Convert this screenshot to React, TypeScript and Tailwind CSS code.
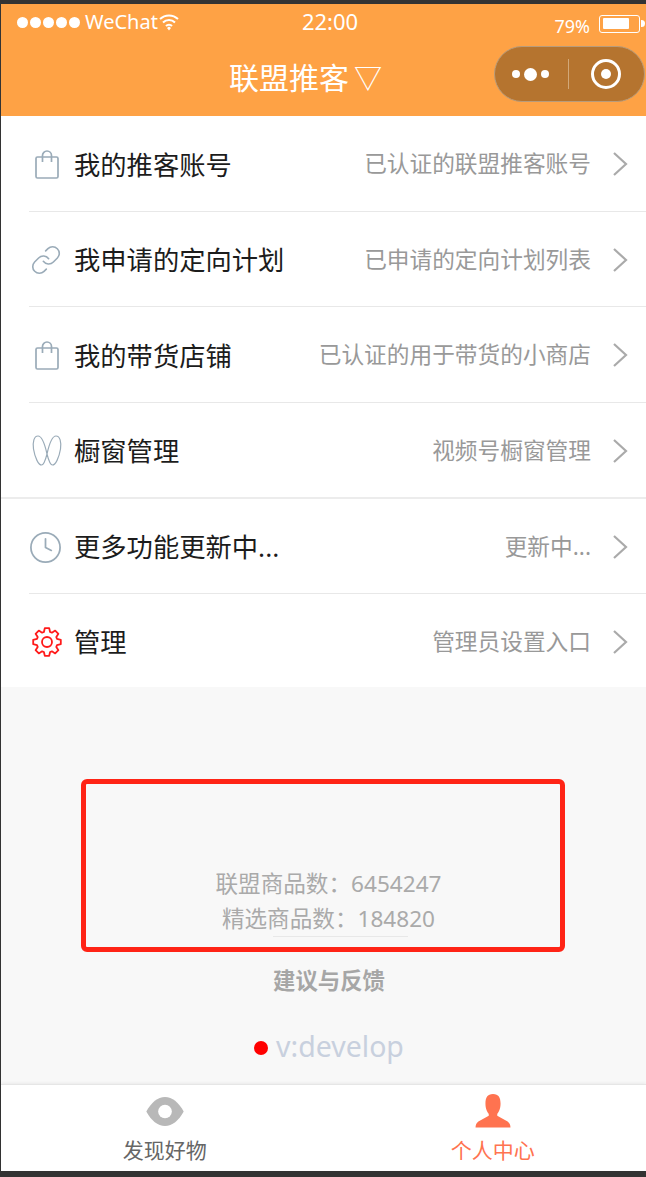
import React from "react";
import { Clock, Link } from "lucide-react";

const font = "font-['Noto_Sans','Noto_Sans_CJK_SC',sans-serif]";

const BagIcon = () => (
  <svg width="24" height="29" viewBox="0 0 24 29" fill="none" stroke="#9aabb8" strokeWidth="1.7" className="mt-[2px] ml-[6px]">
    <rect x="1" y="7" width="22" height="21" rx="1.5" />
    <path d="M7.500 12V5.500a4.500 4.500 0 0 1 9 0V12" />
  </svg>
);

const WingIcon = () => (
  <svg width="30" height="31" viewBox="0 0 30 31" fill="none" stroke="#9aabb8" strokeWidth="1.2" className="mt-[2px] ml-[3px]">
    <path d="M6 1c4 0 7 9 9 18 1.500 6 3 11 5.500 11 3 0 6.500-7 8-16 1-7-.5-13-4.500-13-4 0-7 9-9 18-1.500 6-3 11-5.500 11-3 0-6.500-7-8-16C.5 7 2 1 6 1Z" />
  </svg>
);

// 8 tooth cog outline
const gearPoints = Array.from({ length: 8 }, (_, i) => {
  const a = (i * Math.PI) / 4 - Math.PI / 2;
  const pt = (r: number, d: number) =>
    `${(15 + r * Math.cos(a + d)).toFixed(1)},${(15 + r * Math.sin(a + d)).toFixed(1)}`;
  return [pt(10.500, -0.3), pt(14, -0.16), pt(14, 0.16), pt(10.500, 0.3)].join(" ");
}).join(" ");

const GearIcon = () => (
  <svg width="30" height="30" viewBox="0 0 30 30" fill="none" stroke="#ff1a1a" strokeWidth="1.8" strokeLinejoin="round" className="mt-[2px] ml-[3px]">
    <polygon points={gearPoints} />
    <circle cx="15" cy="15" r="5" />
  </svg>
);

const Chevron = () => (
  <svg width="16" height="26" viewBox="0 0 16 26" fill="none" stroke="#aaaaaa" strokeWidth="2.200" className="mt-[2px] ml-[21px] shrink-0">
    <path d="M2 2l12 11L2 24" />
  </svg>
);

type RowProps = { icon: React.ReactNode; title: string; note: string; heightClass: string; last?: boolean };

const rows: RowProps[] = [
  { icon: <BagIcon />, title: "我的推客账号", note: "已认证的联盟推客账号", heightClass: "h-[95.5px]" },
  {
    icon: <Link size={32} color="#9aabb8" strokeWidth={1.200} className="mt-[2px] ml-[1px]" />,
    title: "我申请的定向计划",
    note: "已申请的定向计划列表",
    heightClass: "h-[95.5px]",
  },
  { icon: <BagIcon />, title: "我的带货店铺", note: "已认证的用于带货的小商店", heightClass: "h-[95.5px]" },
  { icon: <WingIcon />, title: "橱窗管理", note: "视频号橱窗管理", heightClass: "h-[94.5px]", last: true },
];

const moreRows: RowProps[] = [
  {
    icon: <Clock size={35} color="#9aabb8" strokeWidth={1.200} className="mt-[2px] -ml-[1px]" />,
    title: "更多功能更新中...",
    note: "更新中...",
    heightClass: "h-[95px]",
  },
  { icon: <GearIcon />, title: "管理", note: "管理员设置入口", heightClass: "h-[93px]", last: true },
];

const Row = ({ icon, title, note, heightClass, last }: RowProps) => (
  <div className="pl-[28px]">
    <div className={`flex items-center pr-[18px] ${heightClass} ${last ? "" : "border-b border-[#e8e8e8]"}`}>
      <div className="flex w-[45px] shrink-0 items-center">{icon}</div>
      <span className="mt-[3px] text-[26.300px] leading-none text-[#1c1c1c]">{title}</span>
      <span className="mt-[3px] ml-auto text-[22.700px] leading-none text-[#999999]">{note}</span>
      <Chevron />
    </div>
  </div>
);

export default function App() {
  return (
    <div className={`flex h-[1177px] w-[646px] flex-col overflow-hidden bg-[#333333] pt-[4px] pl-[1px] ${font}`}>
      {/* header */}
      <div className="relative h-[112px] shrink-0 bg-[#fea245] text-white">
        <div className="flex h-[36px] items-center justify-between pr-[1px] pl-[16px]">
          <div className="flex w-[170px] items-center">
            <div className="flex gap-[2px]">
              {[0, 1, 2, 3, 4].map((i) => (
                <span key={i} className="h-[11px] w-[11px] rounded-full bg-white" />
              ))}
            </div>
            <span className="ml-[5px] text-[20px] leading-none">WeChat</span>
            <svg width="20" height="18" viewBox="0 0 20 18" fill="none" stroke="white" strokeWidth="2" className="ml-[1px]">
              <path d="M1 6a13 13 0 0 1 18 0M4 9.500a8.500 8.500 0 0 1 12 0M7 13a4 4 0 0 1 6 0" />
              <path d="M8 15l2-1.500 2 1.500-2 2.500Z" fill="white" stroke="none" />
            </svg>
          </div>
          <span className="mt-[-2px] ml-[-2px] text-[22px] leading-none">22:00</span>
          <div className="flex w-[170px] items-center justify-end">
            <span className="mt-[8px] text-[18px] leading-none">79%</span>
            <div className="mt-[3px] ml-[9px] flex h-[18px] w-[41px] items-center rounded-[3px] border border-white pl-[3px]">
              <div className="h-[11px] w-[26px] rounded-[1px] bg-white" />
            </div>
            <div className="mt-[3px] ml-[1px] h-[7px] w-[4px] rounded-r-full bg-white" />
          </div>
        </div>
        <div className="mt-[14px] flex items-center justify-center pr-[36px] text-[30px] leading-[48px]">
          <span>联盟推客</span>
          <span className="ml-[5px] text-[28px] leading-[48px]">▽</span>
        </div>
        <div className="absolute top-[42px] right-[1px] flex h-[56px] w-[151px] items-center rounded-full border border-[#b89c7c] bg-[#b5742f] pl-[17px]">
          <div className="flex items-center gap-[4px]">
            <span className="h-[8px] w-[8px] rounded-full bg-white" />
            <span className="h-[13px] w-[13px] rounded-full bg-white" />
            <span className="h-[8px] w-[8px] rounded-full bg-white" />
          </div>
          <div className="ml-[19px] h-[30px] w-px bg-[#d2a878]" />
          <div className="ml-[22px] flex h-[30px] w-[30px] items-center justify-center rounded-full border-[3px] border-white">
            <span className="h-[10px] w-[10px] rounded-full bg-white" />
          </div>
        </div>
      </div>

      {/* menu */}
      <div className="shrink-0 bg-white">
        {rows.map((r) => (
          <Row key={r.title} {...r} />
        ))}
        <div className="h-[2px] bg-[#ececec]" />
        {moreRows.map((r) => (
          <Row key={r.title} {...r} />
        ))}
      </div>

      {/* footer info */}
      <div className="flex min-h-0 flex-1 flex-col items-center bg-[#f8f8f8]">
        <div className="mt-[92px] -ml-[2px] flex h-[173px] w-[484px] flex-col items-center justify-end rounded-[6px] border-[5px] border-[#ff2416] pb-[10px] pl-[12px]">
          <p className="text-[22.600px] leading-[35px] text-[#aaaaaa]">联盟商品数：6454247</p>
          <p className="text-[22.600px] leading-[35px] text-[#aaaaaa]">精选商品数：184820</p>
          <div className="ml-[24px] h-px w-[135px] bg-[#e8e8e8]" />
        </div>
        <p className="mt-[14px] pl-[11px] text-[22.400px] leading-[30px] font-bold text-[#a6a6a6]">建议与反馈</p>
        <div className="mt-[30px] flex items-center gap-[8px] pl-[11px]">
          <span className="mt-[3px] h-[14px] w-[14px] rounded-full bg-[#ff0000]" />
          <span className="text-[28.500px] leading-[40px] text-[#c8d0de]">v:develop</span>
        </div>
      </div>

      {/* tab bar */}
      <div className="mb-[6px] flex h-[87px] shrink-0 border-t border-[#e6e6e6] bg-white shadow-[0_-1px_3px_rgba(0,0,0,0.06)]">
        <div className="flex w-1/2 flex-col items-center pt-[11px] pl-[5px]">
          <svg width="42" height="31" viewBox="0 0 42 34">
            <path d="M0.500 17C6 7 13 1 21 1s15 6 20.500 16C36 27 29 33 21 33S6 27 0.500 17Z" fill="#b8b8b8" />
            <circle cx="21" cy="17" r="7.500" fill="white" />
          </svg>
          <span className="mt-[9px] text-[21px] leading-[28px] text-[#666666]">发现好物</span>
        </div>
        <div className="flex w-1/2 flex-col items-center pt-[9px] pl-[16px]">
          <svg width="36" height="34" viewBox="0 0 38 36">
            <path
              d="M19 0c6 0 8 4 8 10 0 6-2 9-3.500 11v2l11 6c2 1.500 3 3.500 3 6.500H0.500c0-3 1-5 3-6.500l11-6v-2C13 19 11 16 11 10 11 4 13 0 19 0Z"
              fill="#ff7350"
            />
          </svg>
          <span className="mt-[8px] text-[21px] leading-[28px] text-[#ff7350]">个人中心</span>
        </div>
      </div>
    </div>
  );
}
